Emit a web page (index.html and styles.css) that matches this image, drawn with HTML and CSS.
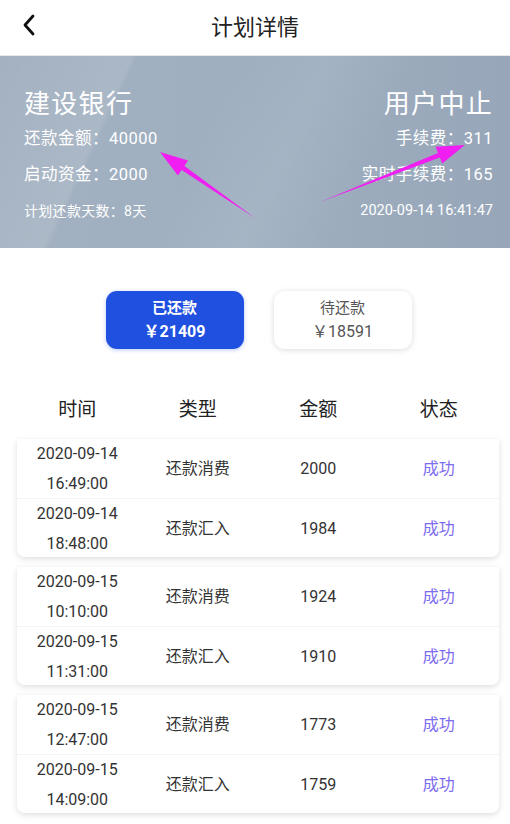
FILE: index.html
```html
<!DOCTYPE html>
<html lang="zh-CN">
<head>
<meta charset="utf-8">
<title>计划详情</title>
<link rel="stylesheet" href="styles.css">
</head>
<body>
<header class="topbar">
  <svg class="back" viewBox="0 0 14 22" width="14" height="22"><path d="M11 2 L3 11 L11 20" fill="none" stroke="#111" stroke-width="2.8" stroke-linecap="round" stroke-linejoin="round"/></svg>
  <h1 class="title">计划详情</h1>
</header>
<section class="banner">
  <div class="col left">
    <div class="big">建设银行</div>
    <div class="line">还款金额：40000</div>
    <div class="line">启动资金：2000</div>
    <div class="small">计划还款天数：8天</div>
  </div>
  <div class="col right">
    <div class="big">用户中止</div>
    <div class="line">手续费：311</div>
    <div class="line">实时手续费：165</div>
    <div class="small">2020-09-14 16:41:47</div>
  </div>
  <svg class="arrows" viewBox="0 0 510 192" width="510" height="192">
    <polygon fill="#f01ef0" points="255,162 184.4,109.9 188.1,104.6 160,96 177.9,119.4 181.6,114.1"/>
    <polygon fill="#f01ef0" points="320,146 439.8,101.5 442.2,107.6 465,89 435.6,90.8 438,96.9"/>
  </svg>
</section>
<section class="tabs">
  <div class="tab active"><div class="tab-label">已还款</div><div class="tab-amt">￥21409</div></div>
  <div class="tab"><div class="tab-label">待还款</div><div class="tab-amt">￥18591</div></div>
</section>
<div class="thead">
  <div>时间</div><div>类型</div><div>金额</div><div>状态</div>
</div>
<div class="card">
  <div class="row"><div>2020-09-14<br>16:49:00</div><div>还款消费</div><div>2000</div><div class="ok">成功</div></div>
  <div class="row"><div>2020-09-14<br>18:48:00</div><div>还款汇入</div><div>1984</div><div class="ok">成功</div></div>
</div>
<div class="card">
  <div class="row"><div>2020-09-15<br>10:10:00</div><div>还款消费</div><div>1924</div><div class="ok">成功</div></div>
  <div class="row"><div>2020-09-15<br>11:31:00</div><div>还款汇入</div><div>1910</div><div class="ok">成功</div></div>
</div>
<div class="card">
  <div class="row"><div>2020-09-15<br>12:47:00</div><div>还款消费</div><div>1773</div><div class="ok">成功</div></div>
  <div class="row"><div>2020-09-15<br>14:09:00</div><div>还款汇入</div><div>1759</div><div class="ok">成功</div></div>
</div>
</body>
</html>
```
FILE: styles.css
```css
* { box-sizing: border-box; }
body {
  margin: 0;
  background: #fff;
  font-family: "Roboto", "Noto Sans CJK SC", sans-serif;
  color: #333;
  overflow: hidden;
}
.topbar {
  height: 56px;
  display: flex;
  align-items: center;
  justify-content: center;
  position: relative;
  padding-bottom: 6px;
  border-bottom: 1px solid #e6e8eb;
}
.back {
  position: absolute;
  left: 22px;
  top: 14px;
}
.title {
  margin: 0;
  font-size: 22px;
  font-weight: 400;
  color: #222;
  font-family: "Noto Sans CJK SC", sans-serif;
}
.banner {
  position: relative;
  height: 192px;
  display: flex;
  justify-content: space-between;
  padding: 31px 17px 0 24px;
  color: #fff;
  background:
    linear-gradient(115deg, rgba(255,255,255,0) 0%, rgba(255,255,255,0.10) 22%, rgba(255,255,255,0) 23%, rgba(255,255,255,0) 40%, rgba(255,255,255,0.08) 55%, rgba(255,255,255,0) 70%),
    linear-gradient(90deg, #a3b1c1 0%, #9fafc0 45%, #97a7b9 100%);
}
.col { display: flex; flex-direction: column; }
.right { align-items: flex-end; text-align: right; }
.big { font-size: 26px; line-height: 34px; height: 34px; letter-spacing: 1.3px; }
.line { font-size: 16.5px; line-height: 36px; letter-spacing: 0.5px; }
.small { font-size: 14.5px; line-height: 36px; }
.left .small { font-size: 14px; letter-spacing: 0.3px; }
.arrows { position: absolute; left: 0; top: 0; }
.tabs {
  display: flex;
  justify-content: center;
  gap: 30px;
  padding: 43px 0 0 7px;
}
.tab {
  width: 138px;
  height: 58px;
  border-radius: 11px;
  background: #fff;
  box-shadow: 0 1px 6px rgba(0,0,0,0.14);
  display: flex;
  flex-direction: column;
  align-items: center;
  justify-content: center;
  color: #555;
  font-size: 15px;
  line-height: 24px;
}
.tab.active {
  background: #1f50e0;
  color: #fff;
  font-weight: 700;
  box-shadow: 0 1px 4px rgba(31,80,224,0.3);
}
.tab-amt { font-size: 16px; }
.thead {
  display: grid;
  grid-template-columns: repeat(4, 1fr);
  margin: 38px 11px 12px 17px;
  height: 40px;
  align-items: center;
  text-align: center;
  font-size: 19px;
  color: #222;
}
.card {
  margin: 0 11px 10px 17px;
  background: #fff;
  border-radius: 0 0 8px 8px;
  box-shadow: 0 2px 6px rgba(0,0,0,0.13);
}
.row {
  display: grid;
  grid-template-columns: repeat(4, 1fr);
  height: 59px;
  align-items: center;
  text-align: center;
  font-size: 16px;
  line-height: 29.5px;
  color: #333;
}
.row + .row { border-top: 1px solid #f4f4f6; }
.ok { color: #7c6cf0; }
```
